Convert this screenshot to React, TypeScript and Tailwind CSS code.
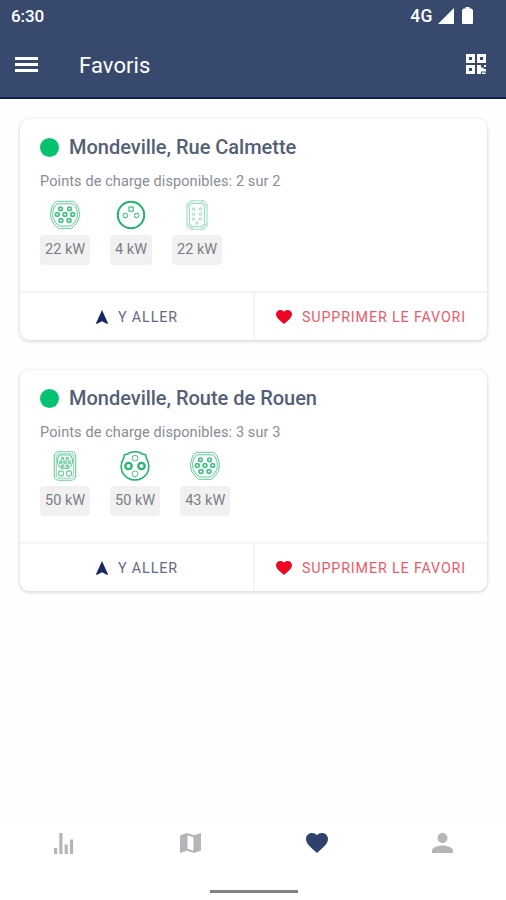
import type { ReactNode } from "react";

type ConnectorKind = "type2" | "domestic" | "type3" | "ccs" | "chademo";

interface Connector {
  kind: ConnectorKind;
  power: string;
}

interface Station {
  name: string;
  available: string;
  connectors: Connector[];
}

const stations: Station[] = [
  {
    name: "Mondeville, Rue Calmette",
    available: "2 sur 2",
    connectors: [
      { kind: "type2", power: "22 kW" },
      { kind: "domestic", power: "4 kW" },
      { kind: "type3", power: "22 kW" },
    ],
  },
  {
    name: "Mondeville, Route de Rouen",
    available: "3 sur 3",
    connectors: [
      { kind: "ccs", power: "50 kW" },
      { kind: "chademo", power: "50 kW" },
      { kind: "type2", power: "43 kW" },
    ],
  },
];

const connectorArt: Record<ConnectorKind, ReactNode> = {
  type2: (
    <g stroke="#5fcb98" strokeWidth="1">
      <path d="M6.500 1.300h17L26.500 4Q29.500 9 29.500 14.500T25.500 24.500L21.500 28.300h-13L4.500 24.500Q.5 20 .5 14.500T3.500 4z" />
      <path d="M7.500 3.800h15l2.500 2Q27.500 10 27.500 14.500T24 23L20.500 26h-11L6 23Q2.500 19 2.500 14.500T5 5.800z" />
      <g stroke="#45c187" strokeWidth="1.700">
        <circle cx="10.500" cy="8.800" r="1.800" />
        <circle cx="19.500" cy="8.800" r="1.800" />
        <circle cx="7.300" cy="14.500" r="1.900" />
        <circle cx="15" cy="14.500" r="1.900" />
        <circle cx="22.700" cy="14.500" r="1.900" />
        <circle cx="11" cy="20.500" r="1.900" />
        <circle cx="19" cy="20.500" r="1.900" />
      </g>
    </g>
  ),
  domestic: (
    <g stroke="#20b26b">
      <circle cx="15" cy="15" r="13.200" strokeWidth="2" />
      <rect x="13" y="7" width="4.200" height="4.200" strokeWidth="1" />
      <circle cx="9.300" cy="15.500" r="2.300" strokeWidth="1" />
      <circle cx="20.700" cy="15.500" r="2.300" strokeWidth="1" />
    </g>
  ),
  type3: (
    <g stroke="#94debb" strokeWidth="1">
      <path d="M8 .8h14l3 3.200v22l-3 3.200H8L5 26V4z" />
      <path d="M10 3.500h10l2.500 3v17l-2.500 3H10l-2.500-3v-17z" />
      <path d="M5 7l6-6M25 7l-6-6M5 23l6 6M25 23l-6 6" />
      <circle cx="11.500" cy="9" r="1.200" />
      <circle cx="18.500" cy="9" r="1.200" />
      <circle cx="11.500" cy="14.200" r="1.200" />
      <circle cx="18.500" cy="14.200" r="1.200" />
      <circle cx="11.500" cy="19" r="1.200" />
      <circle cx="18.500" cy="19" r="1.200" />
      <circle cx="15" cy="23" r="1.200" />
    </g>
  ),
  ccs: (
    <g stroke="#68cd9d" strokeWidth="1.100">
      <rect x="4.300" y=".8" width="21.400" height="28.400" rx="4.500" />
      <rect x="6.300" y="2.800" width="17.400" height="24.400" rx="3" strokeWidth=".8" />
      <path d="M10 4h10q3 3 2.500 7T18 17.500h-6Q8 15.500 7.500 11T10 4z" />
      <g strokeWidth="1.300">
        <circle cx="12.700" cy="7.500" r="1.100" />
        <circle cx="17.300" cy="7.500" r="1.100" />
        <circle cx="10.700" cy="11.300" r="1.300" />
        <circle cx="15" cy="11.300" r="1.300" />
        <circle cx="19.300" cy="11.300" r="1.300" />
        <circle cx="12.700" cy="15" r="1.200" />
        <circle cx="17.300" cy="15" r="1.200" />
      </g>
      <circle cx="11" cy="22.500" r="2.600" />
      <circle cx="19" cy="22.500" r="2.600" />
    </g>
  ),
  chademo: (
    <g stroke="#25b56f">
      <path
        d="M9.500 1.800Q15-.2 20.500 1.800l1.800 1.300 3.200.7.800 3.200Q31 15 27 22.500 22.500 29 15 29T3 22.500Q-1 15 3.700 7L4.500 3.800l3.200-.7z"
        strokeWidth="1.600"
      />
      <circle cx="8.500" cy="15" r="3.200" strokeWidth="2.300" />
      <circle cx="21.500" cy="15" r="3.200" strokeWidth="2.300" />
      <circle cx="15" cy="7.200" r="2.900" strokeWidth=".8" />
      <circle cx="15" cy="22.800" r="2.900" strokeWidth=".8" />
    </g>
  ),
};

const HEART =
  "M12 21.350l-1.450-1.320C5.400 15.360 2 12.280 2 8.500 2 5.420 4.420 3 7.500 3c1.740 0 3.410.81 4.500 2.090C13.090 3.810 14.760 3 16.500 3 19.580 3 22 5.420 22 8.500c0 3.780-3.400 6.860-8.550 11.540L12 21.350z";

function HeartIcon({ className }: { className: string }) {
  return (
    <svg viewBox="2 3 20 18.350" preserveAspectRatio="none" fill="currentColor" className={className}>
      <path d={HEART} />
    </svg>
  );
}

function StatusBar() {
  return (
    <div className="flex h-8 items-center justify-between pl-[11px] pr-[33px] text-white">
      <span className="text-[17px] font-medium leading-8 tracking-[-0.1px]">6:30</span>
      <div className="flex items-center">
        <span className="mr-[5px] text-[17.500px] font-medium leading-8 tracking-[0.5px]">4G</span>
        <svg viewBox="0 0 16 16" className="mr-[8px] h-4 w-4" fill="currentColor">
          <path d="M16 0v16H0z" />
        </svg>
        <svg viewBox="0 0 11 17" className="-mt-px h-[17px] w-[11px]" fill="currentColor">
          <path d="M3.500 0h4v1.500H9.500L11 3v13q0 1-1 1H1q-1 0-1-1V3l1.500-1.500h2z" />
        </svg>
      </div>
    </div>
  );
}

function AppBar() {
  return (
    <div className="flex h-[65px] items-center pl-[15px] pr-[20px] text-white">
      <div className="flex w-[23px] flex-col gap-[3px]">
        <span className="h-[3px] bg-white" />
        <span className="h-[3px] bg-white" />
        <span className="h-[3px] bg-white" />
      </div>
      <h1 className="ml-[41px] mt-[3px] flex-1 text-[22px] leading-7 tracking-[0.1px]">Favoris</h1>
      <svg viewBox="0 0 20 20" className="-mt-px h-5 w-5" fill="currentColor">
        <path
          fillRule="evenodd"
          d="M0 0h9v9H0zM3 3v3h3V3zM11 0h9v9h-9zM14 3v3h3V3zM0 11h9v9H0zM3 14v3h3v-3z"
        />
        <path d="M11 11h4v2.500h2.500V15H20v2.500h-5V20h-4zM18 11h2v2h-2zM16 18.500h3.500V20H16z" />
      </svg>
    </div>
  );
}

function StationCard({ station }: { station: Station }) {
  return (
    <article className="h-[221px] overflow-hidden rounded-[9px] bg-white shadow-[0_1px_3px_1px_rgba(0,0,0,0.12)]">
      <div className="h-[172px] px-5 pt-[14px]">
        <div className="flex items-center gap-[10px]">
          <span className="h-[19px] w-[19px] rounded-full bg-[#05c270]" />
          <h2 className="whitespace-nowrap text-[20px] font-medium leading-7 tracking-[-0.02px] text-[#546075]">
            {station.name}
          </h2>
        </div>
        <p className="mt-[11px] whitespace-nowrap text-[14.500px] leading-5 tracking-[0.1px] text-[#878c95]">
          Points de charge disponibles: {station.available}
        </p>
        <ul className="mt-[8px] flex gap-5">
          {station.connectors.map((c, i) => (
            <li key={i} className="flex flex-col items-center">
              <svg viewBox="0 0 30 30" fill="none" className="h-[30px] w-[30px]">
                {connectorArt[c.kind]}
              </svg>
              <span className="mt-[5px] rounded-[4px] bg-[#f1f1f2] px-[5px] text-[14.500px] leading-[30px] text-[#7b7e85]">
                {c.power}
              </span>
            </li>
          ))}
        </ul>
      </div>
      <div className="flex h-[49px] border-t-2 border-[#f5f5f6]">
        <button className="flex w-[235px] items-center justify-center gap-[10px] border-r-2 border-[#f5f5f6] pt-[3px] pl-px text-[14.300px] tracking-[0.900px] text-[#636a82]">
          <svg viewBox="0 0 12 14" className="mb-[2px] h-[14px] w-3" fill="#172865">
            <path d="M6 0l6 13.300-.700.700L6 11.300.7 14l-.7-.7z" />
          </svg>
          Y ALLER
        </button>
        <button className="flex flex-1 items-center justify-center gap-[10px] pt-[3px] text-[14.300px] tracking-[0.850px] text-[#e95b69]">
          <HeartIcon className="mb-[2px] h-[14px] w-4 text-[#ee0722]" />
          SUPPRIMER LE FAVORI
        </button>
      </div>
    </article>
  );
}

function BottomNav() {
  return (
    <nav className="h-[81px] border-t border-[#fafafa] bg-white">
      <div className="grid h-[46px] grid-cols-4 items-center justify-items-center pl-px text-[#b3b6b8]">
        <svg viewBox="0 0 20 21" className="h-[21px] w-5" fill="currentColor">
          <path d="M0 15h3.200v6H0zM5.300 0h3.200v21H5.300zM10.600 11.500h3.200V21h-3.200zM15.900 6.500h3.200V21h-3.200z" />
        </svg>
        <svg viewBox="0 0 21 20" className="h-5 w-[21px]">
          <path
            fill="currentColor"
            d="M0 2.500L7 0l7 2.200L21 0v17.500L14 20l-7-2.200L0 20zM7.500 2.500v13.200l6 2V4.300z"
            fillRule="evenodd"
          />
        </svg>
        <HeartIcon className="h-5 w-[22px] text-[#2f426b]" />
        <svg viewBox="0 0 21 20" className="h-5 w-[21px]" fill="currentColor">
          <circle cx="10.500" cy="5" r="5" />
          <path d="M0 20v-2.500c0-3.500 7-5 10.500-5s10.500 1.500 10.500 5V20z" />
        </svg>
      </div>
      <div className="mt-[24px] flex justify-center pl-[2px]">
        <div className="h-[3px] w-[88px] bg-[#838383]" />
      </div>
    </nav>
  );
}

export default function App() {
  return (
    <div className="flex h-[900px] w-[506px] flex-col overflow-hidden bg-[#fefefe] font-[Roboto,sans-serif]">
      <header className="h-[99px] shrink-0 border-b-2 border-[#10195c] bg-[#374a6e]">
        <StatusBar />
        <AppBar />
      </header>
      <main className="flex flex-1 flex-col gap-[30px] pl-5 pr-[19px] pt-5">
        {stations.map((s) => (
          <StationCard key={s.name} station={s} />
        ))}
      </main>
      <BottomNav />
    </div>
  );
}
